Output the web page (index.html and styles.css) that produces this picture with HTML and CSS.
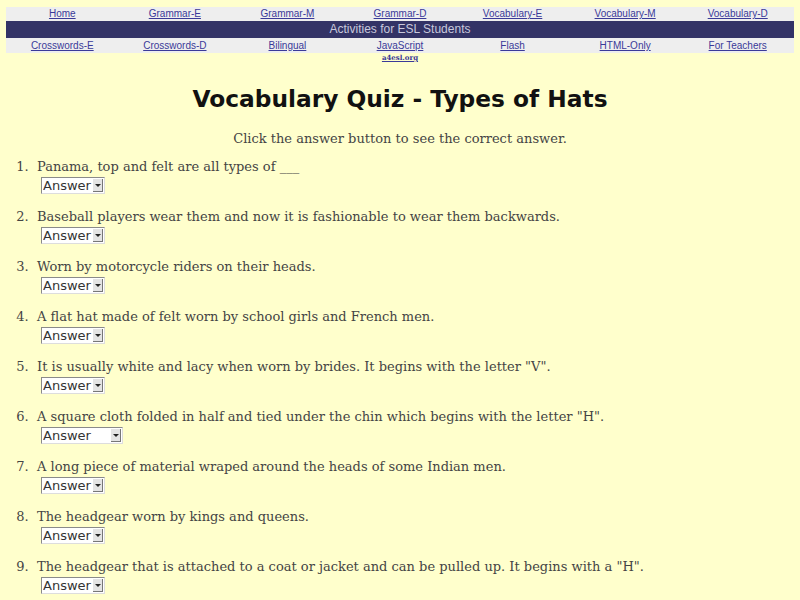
FILE: index.html
```html
<!DOCTYPE html>
<html>
<head>
<meta charset="utf-8">
<title>Vocabulary Quiz - Types of Hats</title>
<link rel="stylesheet" href="styles.css">
</head>
<body>
<div class="nav">
  <div class="row light">
    <a href="#">Home</a>
    <a href="#">Grammar-E</a>
    <a href="#">Grammar-M</a>
    <a href="#">Grammar-D</a>
    <a href="#">Vocabulary-E</a>
    <a href="#">Vocabulary-M</a>
    <a href="#">Vocabulary-D</a>
  </div>
  <div class="bar">Activities for ESL Students</div>
  <div class="row light">
    <a href="#">Crosswords-E</a>
    <a href="#">Crosswords-D</a>
    <a href="#">Bilingual</a>
    <a href="#">JavaScript</a>
    <a href="#">Flash</a>
    <a href="#">HTML-Only</a>
    <a href="#">For Teachers</a>
  </div>
  <div class="row credit">
    <span></span><span></span><span></span>
    <a href="#">a4esl.org</a>
    <span></span><span></span><span></span>
  </div>
</div>

<h1 class="title">Vocabulary Quiz - Types of Hats</h1>
<p class="intro">Click the answer button to see the correct answer.</p>

<ol class="quiz">
  <li><div class="q">Panama, top and felt are all types of ___</div>
    <div class="sel"><select><option>Answer</option><option>hats</option></select><span class="arrow"></span></div></li>
  <li><div class="q">Baseball players wear them and now it is fashionable to wear them backwards.</div>
    <div class="sel"><select><option>Answer</option><option>caps</option></select><span class="arrow"></span></div></li>
  <li><div class="q">Worn by motorcycle riders on their heads.</div>
    <div class="sel"><select><option>Answer</option><option>helmets</option></select><span class="arrow"></span></div></li>
  <li><div class="q">A flat hat made of felt worn by school girls and French men.</div>
    <div class="sel"><select><option>Answer</option><option>beret</option></select><span class="arrow"></span></div></li>
  <li><div class="q">It is usually white and lacy when worn by brides. It begins with the letter "V".</div>
    <div class="sel"><select><option>Answer</option><option>veil</option></select><span class="arrow"></span></div></li>
  <li><div class="q">A square cloth folded in half and tied under the chin which begins with the letter "H".</div>
    <div class="sel wide"><select><option>Answer</option><option>headscarf</option></select><span class="arrow"></span></div></li>
  <li><div class="q">A long piece of material wraped around the heads of some Indian men.</div>
    <div class="sel"><select><option>Answer</option><option>turban</option></select><span class="arrow"></span></div></li>
  <li><div class="q">The headgear worn by kings and queens.</div>
    <div class="sel"><select><option>Answer</option><option>crown</option></select><span class="arrow"></span></div></li>
  <li><div class="q">The headgear that is attached to a coat or jacket and can be pulled up. It begins with a "H".</div>
    <div class="sel"><select><option>Answer</option><option>hood</option></select><span class="arrow"></span></div></li>
</ol>
</body>
</html>
```
FILE: styles.css
```css
html, body {
  margin: 0;
  padding: 0;
  background: #ffffcc;
}
body {
  padding: 7px 6px 0 6px;
  font-family: "DejaVu Serif", serif;
  color: #444444;
}
.nav {
  font-family: "Liberation Sans", Arial, sans-serif;
}
.row {
  display: grid;
  grid-template-columns: repeat(7, 1fr);
  text-align: center;
}
.light {
  background: #eeeeee;
  height: 14px;
  line-height: 14px;
  font-size: 10px;
}
.light + .bar + .light {
  height: 15px;
  line-height: 15px;
}
.row a {
  color: #3a3a99;
  text-decoration: underline;
}
.bar {
  background: #333366;
  color: #c8c8dc;
  font-size: 12px;
  height: 17px;
  line-height: 17px;
  text-align: center;
}
.credit {
  font-family: "DejaVu Serif", serif;
  font-size: 7px;
  font-weight: bold;
  line-height: 9px;
  height: 9px;
}
.credit a {
  color: #3a3a99;
}
.title {
  margin: 22px 0 0 0;
  font-family: "DejaVu Sans", sans-serif;
  font-weight: bold;
  font-size: 23.3px;
  line-height: 30px;
  text-align: center;
  color: #111111;
}
.intro {
  margin: 17px 0 0 0;
  font-size: 13px;
  line-height: 16px;
  text-align: center;
}
.quiz {
  margin: 12px 0 0 0;
  padding: 0 0 0 31px;
  font-size: 13px;
}
.quiz li {
  margin: 0 0 15px 0;
  padding-left: 0;
}
.quiz li::marker {
  content: counter(list-item) ".  ";
}
.q {
  line-height: 16px;
  height: 16px;
}
.sel {
  display: inline-flex;
  align-items: stretch;
  margin: 2px 0 0 4px;
  width: 64px;
  height: 17px;
  box-sizing: border-box;
  background: #ffffff;
  border-top: 1px solid #8a8a8a;
  border-left: 1px solid #8a8a8a;
  border-right: 1px solid #dddddd;
  border-bottom: 1px solid #dddddd;
}
.sel.wide {
  width: 82px;
}
.sel select {
  appearance: none;
  -webkit-appearance: none;
  flex: 1;
  min-width: 0;
  border: 0;
  margin: 0;
  padding: 0 0 0 1px;
  background: transparent;
  font-family: "DejaVu Sans", sans-serif;
  font-size: 13px;
  line-height: 15px;
  height: 15px;
  color: #333333;
  outline: none;
}
.arrow {
  width: 9px;
  margin: 1px 1px 1px 0;
  background: #e4e4e4;
  border-right: 1px solid #777777;
  border-bottom: 1px solid #777777;
  display: flex;
  align-items: center;
  justify-content: center;
}
.arrow::before {
  content: "";
  border-left: 3px solid transparent;
  border-right: 3px solid transparent;
  border-top: 3px solid #222222;
}
```
